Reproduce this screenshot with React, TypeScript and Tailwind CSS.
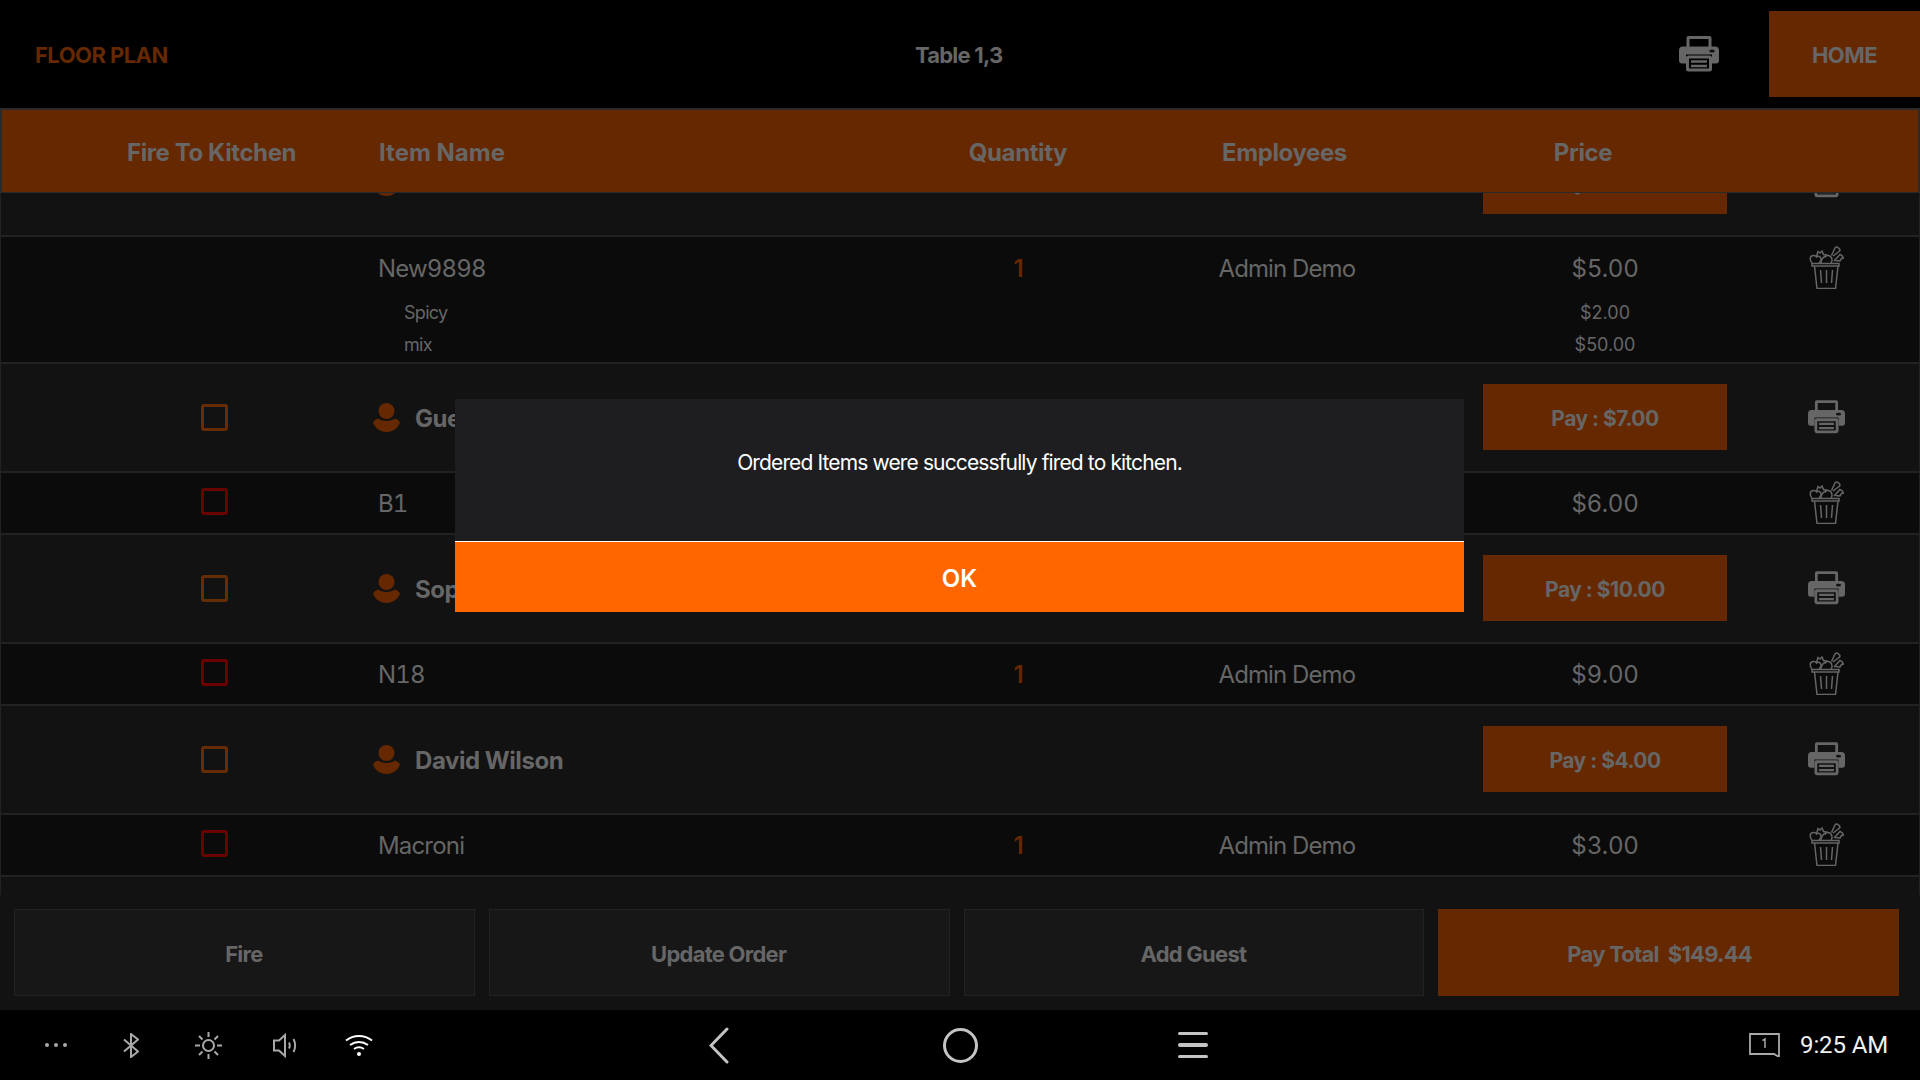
type Row =
  | { kind: "guest"; name: string; pay: string; checkbox?: boolean }
  | { kind: "item"; name: string; price: string; checkbox?: boolean; mods?: { label: string; price: string }[] };

const rows: Row[] = [
  { kind: "guest", name: "Guest 1", pay: "Pay : $8.00", checkbox: false },
  {
    kind: "item",
    name: "New9898",
    price: "$5.00",
    checkbox: false,
    mods: [
      { label: "Spicy", price: "$2.00" },
      { label: "mix", price: "$50.00" },
    ],
  },
  { kind: "guest", name: "Guest 2", pay: "Pay : $7.00" },
  { kind: "item", name: "B1", price: "$6.00" },
  { kind: "guest", name: "Sophia Miller", pay: "Pay : $10.00" },
  { kind: "item", name: "N18", price: "$9.00" },
  { kind: "guest", name: "David Wilson", pay: "Pay : $4.00" },
  { kind: "item", name: "Macroni", price: "$3.00" },
];

function PrinterIcon({ className }: { className: string }) {
  return (
    <svg viewBox="0 0 40 36" className={className}>
      <path d="M7.500 13V2.500A2 2 0 0 1 9.500 .5h21a2 2 0 0 1 2 2V13h-3V3.500h-19V13z" fill="currentColor" />
      <path
        d="M4 11h32a4 4 0 0 1 4 4v10a3 3 0 0 1-3 3h-4v-9H7v9H3a3 3 0 0 1-3-3V15a4 4 0 0 1 4-4z"
        fill="currentColor"
      />
      <ellipse cx="33" cy="15.500" rx="2.800" ry="1.500" fill="#121212" />
      <rect x="8.500" y="21.500" width="23" height="13" rx="1" fill="none" stroke="currentColor" strokeWidth="3" />
      <path d="M12 26h16M12 30.500h16" stroke="currentColor" strokeWidth="2.500" />
    </svg>
  );
}

function BasketIcon() {
  return (
    <svg viewBox="0 0 35 43" fill="none" stroke="#666666" strokeWidth="1.500" className="h-[43px] w-[35px]">
      <path d="M3 17.500h27v2.500H3z" />
      <path d="M5.500 20l2.500 22.500h18.500L29 20" />
      <path d="M11.500 24l1 13M17.500 24v13M23.500 24l-1 13M16.500 42.500h.8M19 42.500h.8" />
      <path d="M3 17C.5 14 .5 10 4 9.500c2-.3 3 .5 3.500 1.500 1-1 3-1 4 .5 1.500 2 0 4-1.500 5.500" />
      <path d="M7.500 10.500L9 5.500l2 1.500 2-2 1.500 3.500 3 .5-1.500 2.500" />
      <path d="M12 17c0-4 3-7 6-7.500 3-.5 5 2 5 4.500 0 1.500-.5 2.500-1 3" />
      <path d="M22.500 9.500L26 2c.5-1 2-1.500 3-.5l1.500 1.500c.5.800.3 2-.5 2.500L24 10" />
      <path d="M25 15l6-6.500 2 1 1.500 2.500-2 .5L31 15l-4.500-.5" />
    </svg>
  );
}

function PersonIcon() {
  return (
    <svg viewBox="0 0 27 29" className="h-[29px] w-[27px]" fill="#662800">
      <circle cx="13.500" cy="8" r="8" />
      <path d="M5 15.500c2 1.500 5 2.500 8.500 2.500s6.500-1 8.500-2.500c2.500 1 4.500 2.500 5 4-1.500 5-7 9.500-13.500 9.500S1.500 24.500 0 19.500c.5-1.500 2.500-3 5-4z" />
    </svg>
  );
}

function Checkbox({ red }: { red?: boolean }) {
  return (
    <div
      className={`h-[27px] w-[27px] rounded-[3px] border-[3px] ${red ? "border-[#6a0000]" : "border-[#662c06]"}`}
    />
  );
}

function TableRow({ row }: { row: Row }) {
  if (row.kind === "guest") {
    return (
      <div className="flex h-[109px] items-center border-x border-b-2 border-[#222222] bg-[#121212]">
        <div className="h-[27px] w-[372px] pl-[200px]">{row.checkbox !== false && <Checkbox />}</div>
        <div className="flex w-[1110px] items-center gap-[15px]">
          <PersonIcon />
          <span className="pt-[2px] text-[24px] leading-none font-bold tracking-[-0.45px] text-[#666666]">
            {row.name}
          </span>
        </div>
        <div className="mb-[1px] flex h-[66px] w-[244px] items-center justify-center bg-[#662800] pt-[4px] text-[21px] font-bold tracking-[-0.5px] text-[#666666]">
          {row.pay}
        </div>
        <div className="flex w-[192px] justify-center pb-[3px] pl-[7px] text-[#666666]">
          <PrinterIcon className="h-[35px] w-[37px]" />
        </div>
      </div>
    );
  }

  return (
    <div className="border-x border-b-2 border-[#222222] bg-[#0b0b0b] text-[#666666]">
      <div className={`flex h-[60px] items-center text-[24px] ${row.mods ? "pt-[4px]" : "pt-[2px]"}`}>
        <div className="w-[377px] pb-[5px] pl-[200px]">{row.checkbox !== false && <Checkbox red />}</div>
        <div className="w-[569px] tracking-[-0.8px] tabular-nums">{row.name}</div>
        <div className="w-[144px] text-center font-semibold text-[#662800]">1</div>
        <div className="w-[393px] text-center tracking-[-0.9px]">Admin Demo</div>
        <div className="w-[244px] text-center tracking-[0.3px]">{row.price}</div>
        <div className={`flex w-[192px] justify-center pl-[7px] ${row.mods ? "pb-[4px]" : "pb-[3px]"}`}>
          <BasketIcon />
        </div>
      </div>
      {row.mods && (
        <div className="-mt-[1px] pb-[2px]">
          {row.mods.map((mod) => (
            <div key={mod.label} className="flex h-[32px] items-center text-[18px]">
              <div className="w-[1482px] pl-[403px] tracking-[-0.7px]">{mod.label}</div>
              <div className="w-[244px] text-center">{mod.price}</div>
            </div>
          ))}
        </div>
      )}
    </div>
  );
}

function BottomButton({ label, primary }: { label: string; primary?: boolean }) {
  return (
    <button
      className={`h-[87px] flex-1 border pt-[3px] text-[22px] font-bold tracking-[-0.75px] whitespace-pre text-[#666666] ${
        primary ? "border-[#662800] bg-[#662800]" : "border-[#222222] bg-[#171717]"
      }`}
    >
      <span className={primary ? "block pr-[18px]" : "block pr-[1px]"}>{label}</span>
    </button>
  );
}

function SystemBar() {
  return (
    <div className="flex h-[70px] items-center bg-black text-[#b8b8b8]">
      <div className="flex w-[709px] items-center pl-[45px]">
        <svg viewBox="0 0 22 4" className="h-[4px] w-[22px]" fill="#a8a8a8">
          <circle cx="2" cy="2" r="2" />
          <circle cx="11" cy="2" r="2" />
          <circle cx="20" cy="2" r="2" />
        </svg>
        <svg viewBox="0 0 16 25" className="ml-[56px] h-[25px] w-[16px]" fill="none" stroke="#a8a8a8" strokeWidth="2">
          <path d="M1 6.500l14 12L8 24V1l7 5.500-14 12" />
        </svg>
        <svg viewBox="0 0 27 27" className="ml-[56px] h-[27px] w-[27px]" fill="none" stroke="#a8a8a8" strokeWidth="2">
          <circle cx="13.500" cy="13.500" r="5.500" />
          <path d="M13.500 0v5M13.500 22v5M0 13.500h5M22 13.500h5M4 4l3.500 3.500M19.500 19.500L23 23M23 4l-3.500 3.500M7.500 19.500L4 23" />
        </svg>
        <svg viewBox="0 0 24 25" className="ml-[51px] h-[25px] w-[24px]" fill="none" stroke="#a8a8a8" strokeWidth="2">
          <path d="M1 7.500h5L12 2v21l-6-5.500H1z" />
          <path d="M16 9.500c1 2 1 4 0 6M20.500 6c2 4 2 9 0 13" />
        </svg>
        <svg viewBox="0 0 28 22" className="ml-[48px] h-[22px] w-[28px]" fill="none" stroke="#ffffff" strokeWidth="2">
          <path d="M1 6.500C8.500.5 19.500.5 27 6.500M5 11c5.500-4 12.500-4 18 0M9 15c3-2 7-2 10 0" />
          <circle cx="14" cy="20" r="2" fill="#ffffff" stroke="none" />
        </svg>
      </div>
      <div className="flex w-[510px] items-center">
        <svg viewBox="0 0 20 37" className="h-[37px] w-[20px]" fill="none" stroke="#c4c4c4" strokeWidth="3" strokeLinecap="round">
          <path d="M18 2L2 18.500 18 35" />
        </svg>
        <div className="ml-[214px] h-[35px] w-[35px] rounded-full border-[3px] border-[#c4c4c4]" />
        <div className="ml-[200px] flex w-[30px] flex-col gap-[8px]">
          <div className="h-[3.500px] rounded-full bg-[#c4c4c4]" />
          <div className="h-[3.500px] rounded-full bg-[#c4c4c4]" />
          <div className="h-[3.500px] rounded-full bg-[#c4c4c4]" />
        </div>
      </div>
      <div className="ml-[530px] flex items-center">
        <svg viewBox="0 0 31 24" className="h-[24px] w-[31px]" fill="none" stroke="#a8a8a8" strokeWidth="1.800">
          <path d="M1 1h29v23l-5-3H1z" />
          <path d="M13.500 7.500l2.500-1.500v9" strokeWidth="1.500" />
        </svg>
        <span className="ml-[20px] font-['Roboto',sans-serif] text-[24px] leading-none tracking-[-0.1px] text-[#f0f0f0]">
          9:25 AM
        </span>
      </div>
    </div>
  );
}

export default function App() {
  return (
    <div className="relative flex h-screen w-screen flex-col overflow-hidden bg-black font-['Inter',sans-serif]">
      {/* Top bar */}
      <div className="flex h-[108px] items-center">
        <div className="w-[1679px] pt-[2px] pl-[35px]">
          <div className="relative flex items-center">
            <span className="text-[22px] font-bold tracking-[-0.55px] text-[#662800]">FLOOR PLAN</span>
            <span className="absolute left-[880px] w-[86px] text-center text-[22px] font-bold tracking-[-0.8px] whitespace-nowrap text-[#666666]">
              Table 1,3
            </span>
          </div>
        </div>
        <div className="w-[90px] pb-[1px] text-[#666666]">
          <PrinterIcon className="h-[37px] w-[40px]" />
        </div>
        <div className="flex h-[86px] w-[151px] items-center justify-center bg-[#662800] pt-[2px] text-[22px] font-bold tracking-[-0.5px] text-[#666666]">
          HOME
        </div>
      </div>

      {/* Column header */}
      <div className="z-10 flex h-[85px] items-center border-x-2 border-t-2 border-b border-[#2a2a2a] bg-[#662800] pt-[3px] text-[24px] font-bold tracking-[-0.4px] text-[#666666]">
        <div className="w-[377px] pl-[125px]">Fire To Kitchen</div>
        <div className="w-[567px] tracking-[0px]">Item Name</div>
        <div className="w-[144px] text-center">Quantity</div>
        <div className="w-[389px] text-center">Employees</div>
        <div className="w-[208px] text-center">Price</div>
      </div>

      {/* Order rows, scrolled so the first guest is cut off by the header */}
      <div className="h-[702px] overflow-hidden border-x border-[#222222] bg-[#121212]">
        <div className="-mx-px -mt-[65px]">
          {rows.map((row) => (
            <TableRow key={row.name} row={row} />
          ))}
        </div>
      </div>

      {/* Action buttons */}
      <div className="flex h-[115px] gap-[14px] bg-[#121212] pt-[14px] pr-[21px] pl-[14px]">
        <BottomButton label="Fire" />
        <BottomButton label="Update Order" />
        <BottomButton label="Add Guest" />
        <BottomButton label="Pay Total  $149.44" primary />
      </div>

      <SystemBar />

      {/* Confirmation dialog */}
      <div className="absolute top-[399px] left-[455px] z-20 w-[1009px]">
        <div className="flex h-[143px] items-center justify-center border-b-[1.500px] border-white bg-[#1e1e20] text-[21px] tracking-[-0.87px] text-white">
          <span className="pb-[14px]">Ordered Items were successfully fired to kitchen.</span>
        </div>
        <div className="flex h-[70px] items-center justify-center bg-[#ff6600] pt-[3px] text-[24px] font-semibold text-white">
          OK
        </div>
      </div>
    </div>
  );
}
